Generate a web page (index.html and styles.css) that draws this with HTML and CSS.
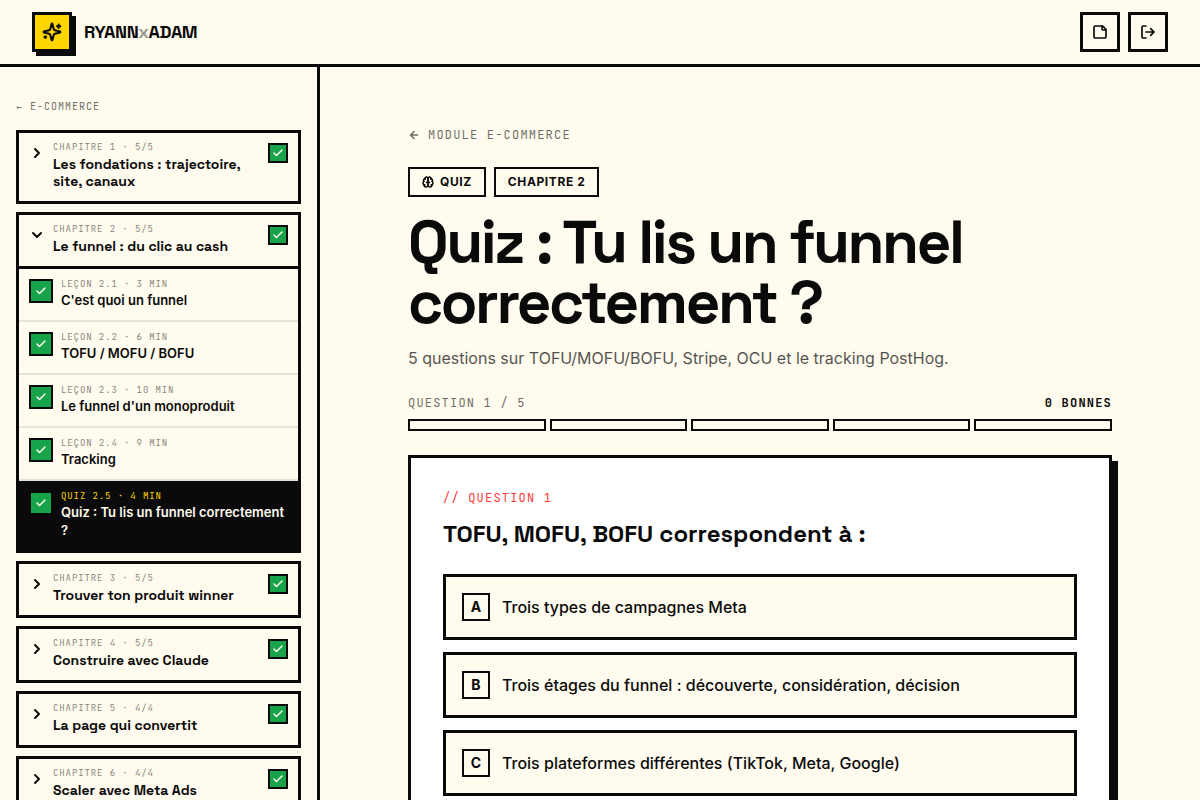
FILE: index.html
```html
<!DOCTYPE html>
<html lang="fr">
<head>
    <meta charset="UTF-8">
    <meta name="viewport" content="width=device-width, initial-scale=1.0">
    <title>Quiz : Tu lis un funnel correctement ?</title>
    <link rel="stylesheet" href="styles.css">
</head>
<body>
    <!-- Shared icons -->
    <svg class="sprite" aria-hidden="true">
        <symbol id="check" viewBox="0 0 24 24"><path d="M20 6 9 17l-5-5"/></symbol>
        <symbol id="right" viewBox="0 0 24 24"><path d="m9 18 6-6-6-6"/></symbol>
        <symbol id="down" viewBox="0 0 24 24"><path d="m6 9 6 6 6-6"/></symbol>
    </svg>

    <!-- Header -->
    <header class="topbar">
        <a class="brand" href="#">
            <span class="logo">
                <svg class="icon icon-lg" viewBox="0 0 24 24">
                    <path d="M9.937 15.5A2 2 0 0 0 8.5 14.063l-6.135-1.582a.5.5 0 0 1 0-.962L8.5 9.936A2 2 0 0 0 9.937 8.5l1.582-6.135a.5.5 0 0 1 .963 0L14.063 8.5A2 2 0 0 0 15.5 9.937l6.135 1.581a.5.5 0 0 1 0 .964L15.5 14.063a2 2 0 0 0-1.437 1.437l-1.582 6.135a.5.5 0 0 1-.963 0z"/>
                    <path d="M20 3v4M22 5h-4M4 17v2M5 18H3"/>
                </svg>
            </span>
            <span class="brand-name">RYANN<span class="brand-x">x</span>ADAM</span>
        </a>
        <div class="actions">
            <button class="icon-btn" type="button" aria-label="Notes">
                <svg class="icon" viewBox="0 0 24 24"><path d="M16 3H5a2 2 0 0 0-2 2v14a2 2 0 0 0 2 2h14a2 2 0 0 0 2-2V8Z"/><path d="M15 3v4a2 2 0 0 0 2 2h4"/></svg>
            </button>
            <button class="icon-btn" type="button" aria-label="Déconnexion">
                <svg class="icon" viewBox="0 0 24 24"><path d="M9 21H5a2 2 0 0 1-2-2V5a2 2 0 0 1 2-2h4"/><path d="m16 17 5-5-5-5M21 12H9"/></svg>
            </button>
        </div>
    </header>

    <div class="layout">
        <!-- Sidebar -->
        <aside class="sidebar">
            <a class="side-back" href="#"><span class="arrow">←</span> E-COMMERCE</a>
            <nav class="chapters">
                <section class="chapter">
                    <button class="chapter-head" type="button">
                        <svg class="icon chevron"><use href="#right"/></svg>
                        <span class="text"><span class="eyebrow">CHAPITRE 1 · 5/5</span><span class="chapter-title">Les fondations : trajectoire, site, canaux</span></span>
                        <span class="done"><svg class="icon"><use href="#check"/></svg></span>
                    </button>
                </section>

                <section class="chapter">
                    <button class="chapter-head open" type="button">
                        <svg class="icon chevron"><use href="#down"/></svg>
                        <span class="text"><span class="eyebrow">CHAPITRE 2 · 5/5</span><span class="chapter-title">Le funnel : du clic au cash</span></span>
                        <span class="done"><svg class="icon"><use href="#check"/></svg></span>
                    </button>
                    <a class="lesson" href="#">
                        <span class="done done-lg"><svg class="icon"><use href="#check"/></svg></span>
                        <span class="text"><span class="eyebrow">LEÇON 2.1 · 3 MIN</span><span class="lesson-title">C'est quoi un funnel</span></span>
                    </a>
                    <a class="lesson" href="#">
                        <span class="done done-lg"><svg class="icon"><use href="#check"/></svg></span>
                        <span class="text"><span class="eyebrow">LEÇON 2.2 · 6 MIN</span><span class="lesson-title">TOFU / MOFU / BOFU</span></span>
                    </a>
                    <a class="lesson" href="#">
                        <span class="done done-lg"><svg class="icon"><use href="#check"/></svg></span>
                        <span class="text"><span class="eyebrow">LEÇON 2.3 · 10 MIN</span><span class="lesson-title">Le funnel d'un monoproduit</span></span>
                    </a>
                    <a class="lesson" href="#">
                        <span class="done done-lg"><svg class="icon"><use href="#check"/></svg></span>
                        <span class="text"><span class="eyebrow">LEÇON 2.4 · 9 MIN</span><span class="lesson-title">Tracking</span></span>
                    </a>
                    <a class="lesson active" href="#" aria-current="page">
                        <span class="done done-lg"><svg class="icon"><use href="#check"/></svg></span>
                        <span class="text"><span class="eyebrow">QUIZ 2.5 · 4 MIN</span><span class="lesson-title">Quiz : Tu lis un funnel correctement ?</span></span>
                    </a>
                </section>

                <section class="chapter">
                    <button class="chapter-head" type="button">
                        <svg class="icon chevron"><use href="#right"/></svg>
                        <span class="text"><span class="eyebrow">CHAPITRE 3 · 5/5</span><span class="chapter-title">Trouver ton produit winner</span></span>
                        <span class="done"><svg class="icon"><use href="#check"/></svg></span>
                    </button>
                </section>

                <section class="chapter">
                    <button class="chapter-head" type="button">
                        <svg class="icon chevron"><use href="#right"/></svg>
                        <span class="text"><span class="eyebrow">CHAPITRE 4 · 5/5</span><span class="chapter-title">Construire avec Claude</span></span>
                        <span class="done"><svg class="icon"><use href="#check"/></svg></span>
                    </button>
                </section>

                <section class="chapter">
                    <button class="chapter-head" type="button">
                        <svg class="icon chevron"><use href="#right"/></svg>
                        <span class="text"><span class="eyebrow">CHAPITRE 5 · 4/4</span><span class="chapter-title">La page qui convertit</span></span>
                        <span class="done"><svg class="icon"><use href="#check"/></svg></span>
                    </button>
                </section>

                <section class="chapter">
                    <button class="chapter-head" type="button">
                        <svg class="icon chevron"><use href="#right"/></svg>
                        <span class="text"><span class="eyebrow">CHAPITRE 6 · 4/4</span><span class="chapter-title">Scaler avec Meta Ads</span></span>
                        <span class="done"><svg class="icon"><use href="#check"/></svg></span>
                    </button>
                </section>
            </nav>
        </aside>

        <!-- Quiz -->
        <main class="main">
            <div class="content">
                <a class="back" href="#">
                    <svg class="icon icon-sm" viewBox="0 0 24 24"><path d="m12 19-7-7 7-7M19 12H5"/></svg>
                    MODULE E-COMMERCE
                </a>
                <div class="tags">
                    <span class="tag">
                        <svg class="icon icon-sm" viewBox="0 0 24 24">
                            <path d="M12 5a3 3 0 1 0-5.997.125 4 4 0 0 0-2.526 5.77 4 4 0 0 0 .556 6.588A4 4 0 1 0 12 18Z"/>
                            <path d="M12 5a3 3 0 1 1 5.997.125 4 4 0 0 1 2.526 5.77 4 4 0 0 1-.556 6.588A4 4 0 1 1 12 18Z"/>
                            <path d="M15 13a4.5 4.5 0 0 1-3-4 4.5 4.5 0 0 1-3 4M17.599 6.5a3 3 0 0 0 .399-1.375M6.003 5.125A3 3 0 0 0 6.401 6.5M3.477 10.896a4 4 0 0 1 .585-.396M19.938 10.5a4 4 0 0 1 .585.396M6 18a4 4 0 0 1-1.967-.516M19.967 17.484A4 4 0 0 1 18 18"/>
                        </svg>
                        QUIZ
                    </span>
                    <span class="tag">CHAPITRE 2</span>
                </div>
                <h1 class="title">Quiz : Tu lis un funnel correctement ?</h1>
                <p class="subtitle">5 questions sur TOFU/MOFU/BOFU, Stripe, OCU et le tracking PostHog.</p>

                <div class="progress-label">
                    <span class="progress-step">QUESTION 1 / 5</span>
                    <strong>0 BONNES</strong>
                </div>
                <div class="progress">
                    <span></span><span></span><span></span><span></span><span></span>
                </div>

                <section class="card">
                    <p class="card-eyebrow">// QUESTION 1</p>
                    <h2 class="question">TOFU, MOFU, BOFU correspondent à :</h2>
                    <div class="options">
                        <button class="option" type="button"><span class="letter">A</span>Trois types de campagnes Meta</button>
                        <button class="option" type="button"><span class="letter">B</span>Trois étages du funnel : découverte, considération, décision</button>
                        <button class="option" type="button"><span class="letter">C</span>Trois plateformes différentes (TikTok, Meta, Google)</button>
                    </div>
                </section>
            </div>
        </main>
    </div>
</body>
</html>
```
FILE: styles.css
```css
/* General */
:root {
    --ink: #0a0a0a;
    --cream: #fffbee;
    --yellow: #ffd600;
    --green: #16a34a;
    --red: #ff3b3b;
    --sans: Inter, "Liberation Sans", sans-serif;
    --display: "Space Grotesk", Inter, "Liberation Sans", sans-serif;
    --mono: "JetBrains Mono", "Liberation Mono", monospace;
}

* {
    box-sizing: border-box;
}

body {
    margin: 0;
    min-height: 100vh;
    display: flex;
    flex-direction: column;
    background: var(--cream);
    color: var(--ink);
    font-family: var(--sans);
    font-size: 16px;
    line-height: 24px;
}

a {
    color: inherit;
    text-decoration: none;
}

button {
    font: inherit;
    color: inherit;
    text-align: left;
    cursor: pointer;
}

h1, h2, p {
    margin: 0;
}

.sprite {
    display: none;
}

.icon {
    width: 16px;
    height: 16px;
    flex-shrink: 0;
    fill: none;
    stroke: currentColor;
    stroke-width: 2.5;
    stroke-linecap: round;
    stroke-linejoin: round;
}

.icon-sm {
    width: 12px;
    height: 12px;
    stroke-width: 3;
}

.icon-lg {
    width: 20px;
    height: 20px;
}

/* Header */
.topbar {
    display: flex;
    align-items: center;
    justify-content: space-between;
    padding: 12px 32px;
    border-bottom: 3px solid var(--ink);
}

.brand, .actions {
    display: flex;
    align-items: center;
}

.brand {
    gap: 12px;
}

.actions {
    gap: 8px;
}

.logo {
    display: grid;
    place-items: center;
    width: 40px;
    height: 40px;
    background: var(--yellow);
    border: 3px solid var(--ink);
    box-shadow: 4px 4px 0 var(--ink);
}

.brand-name {
    font-family: var(--display);
    font-size: 18px;
    font-weight: 700;
    letter-spacing: -0.025em;
}

.brand-x {
    opacity: 0.4;
}

.icon-btn {
    display: grid;
    place-items: center;
    width: 40px;
    height: 40px;
    padding: 0;
    background: var(--cream);
    border: 3px solid var(--ink);
}

/* Sidebar */
.layout {
    display: flex;
    flex: 1;
}

.sidebar {
    width: 320px;
    flex-shrink: 0;
    padding: 32px 16px;
    border-right: 3px solid var(--ink);
}

.side-back {
    display: flex;
    gap: 7px;
    margin-bottom: 16px;
    font-family: var(--mono);
    font-size: 10px;
    line-height: 15px;
    letter-spacing: 0.1em;
    opacity: 0.6;
}

.arrow {
    font-family: "DejaVu Sans Mono", monospace;
}

.chapters {
    display: flex;
    flex-direction: column;
    gap: 8px;
}

.chapter {
    border: 3px solid var(--ink);
}

.chapter-head, .lesson {
    display: flex;
    align-items: flex-start;
    gap: 8px;
    width: 100%;
    padding: 10px 10px 11px;
}

.chapter-head {
    background: none;
    border: 0;
}

.chapter-head.open {
    border-bottom: 3px solid var(--ink);
}

.chevron {
    margin-top: 2px;
    stroke-width: 3;
}

.text {
    display: flex;
    flex: 1;
    flex-direction: column;
    gap: 2px;
    min-width: 0;
}

.chapter-head .text {
    gap: 5px;
}

.eyebrow {
    font-family: var(--mono);
    font-size: 9px;
    line-height: 10px;
    letter-spacing: 0.1em;
    opacity: 0.5;
}

.chapter-head .eyebrow {
    line-height: 8px;
}

.chapter-title {
    font-family: var(--display);
    font-size: 14px;
    font-weight: 700;
    line-height: 17px;
}

.lesson-title {
    font-size: 13px;
    font-weight: 600;
    line-height: 18px;
}

.done {
    display: grid;
    place-items: center;
    width: 20px;
    height: 20px;
    flex-shrink: 0;
    background: var(--green);
    border: 2px solid var(--ink);
    color: var(--cream);
}

.done .icon {
    width: 12px;
    height: 12px;
    stroke-width: 3;
}

.done-lg {
    width: 24px;
    height: 24px;
}

.lesson {
    border-bottom: 2px solid #e6e3d9;
}

.lesson.active {
    background: var(--ink);
    border-bottom: 0;
    color: var(--cream);
}

.active .eyebrow {
    color: var(--yellow);
    opacity: 1;
}

/* Main column */
.main {
    flex: 1;
    min-width: 0;
}

.content {
    max-width: 768px;
    margin: 0 auto;
    padding: 60px 32px;
}

.back {
    display: flex;
    align-items: center;
    gap: 8px;
    margin-bottom: 24px;
    font-family: var(--mono);
    font-size: 12px;
    line-height: 16px;
    letter-spacing: 0.1em;
    opacity: 0.6;
}

.tags {
    display: flex;
    gap: 8px;
    margin-bottom: 16px;
}

.tag {
    display: flex;
    align-items: center;
    gap: 6px;
    padding: 5px 12px;
    border: 2px solid var(--ink);
    font-size: 12px;
    font-weight: 700;
    line-height: 16px;
    letter-spacing: 0.05em;
}

.title {
    margin-bottom: 12px;
    font-family: var(--display);
    font-size: 60px;
    font-weight: 700;
    line-height: 60px;
    letter-spacing: -0.04em;
}

.subtitle {
    margin-bottom: 24px;
    line-height: 26px;
    opacity: 0.7;
}

/* Progress */
.progress-label {
    display: flex;
    justify-content: space-between;
    margin-bottom: 8px;
    font-family: var(--mono);
    font-size: 12px;
    line-height: 16px;
    letter-spacing: 0.1em;
}

.progress-step {
    opacity: 0.6;
}

.progress {
    display: grid;
    grid-template-columns: repeat(5, 1fr);
    gap: 4px;
    margin-bottom: 24px;
}

.progress span {
    height: 12px;
    border: 2px solid var(--ink);
}

/* Question card */
.card {
    padding: 32px;
    background: white;
    border: 3px solid var(--ink);
    box-shadow: 6px 6px 0 var(--ink);
}

.card-eyebrow {
    margin-bottom: 12px;
    color: var(--red);
    font-family: var(--mono);
    font-size: 12px;
    line-height: 16px;
    letter-spacing: 0.1em;
}

.question {
    margin-bottom: 24px;
    font-family: var(--display);
    font-size: 24px;
    font-weight: 700;
    line-height: 32px;
}

.options {
    display: flex;
    flex-direction: column;
    gap: 12px;
}

.option {
    display: flex;
    align-items: center;
    gap: 12px;
    padding: 16px;
    background: var(--cream);
    border: 3px solid var(--ink);
    font-weight: 500;
}

.letter {
    display: grid;
    place-items: center;
    width: 28px;
    height: 28px;
    flex-shrink: 0;
    border: 2px solid var(--ink);
    font-size: 14px;
    font-weight: 700;
    line-height: 20px;
}
```
